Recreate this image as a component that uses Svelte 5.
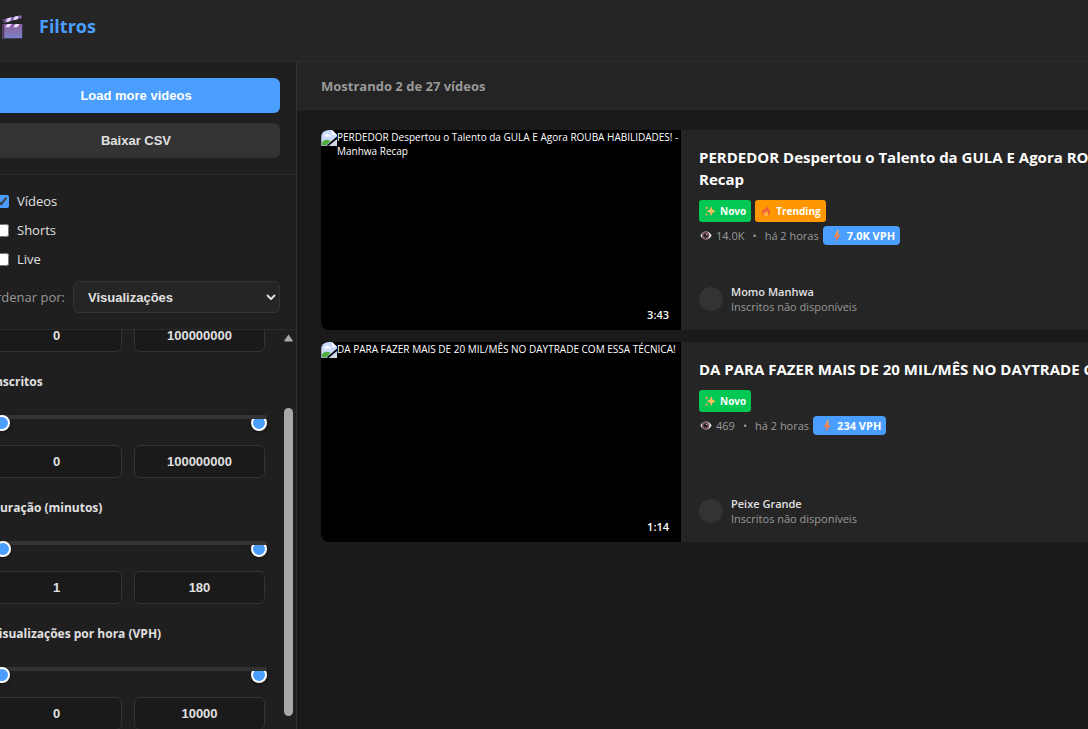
<script>
  import { onMount } from 'svelte';

  const kinds = [
    { id: 'videos', label: 'Vídeos', checked: true },
    { id: 'shorts', label: 'Shorts', checked: false },
    { id: 'live', label: 'Live', checked: false }
  ];

  const filters = [
    { id: 'views', label: 'Visualizações', min: 0, max: 100000000 },
    { id: 'subs', label: 'Inscritos', min: 0, max: 100000000 },
    { id: 'duration', label: 'Duração (minutos)', min: 1, max: 180 },
    { id: 'vph', label: 'Visualizações por hora (VPH)', min: 0, max: 10000 }
  ];

  const videos = [
    {
      title: 'PERDEDOR Despertou o Talento da GULA E Agora ROUBA HABILIDADES! - Manhwa Recap',
      duration: '3:43', trending: true, views: '14.0K', age: 'há 2 horas', vph: '7.0K VPH',
      channel: 'Momo Manhwa'
    },
    {
      title: 'DA PARA FAZER MAIS DE 20 MIL/MÊS NO DAYTRADE COM ESSA TÉCNICA!',
      duration: '1:14', trending: false, views: '469', age: 'há 2 horas', vph: '234 VPH',
      channel: 'Peixe Grande'
    }
  ];

  let list;
  onMount(() => {
    list.scrollTop = 103;
  });
</script>

{#snippet clapper()}
  <svg class="clapper" viewBox="0 0 21 24" aria-hidden="true">
    <defs>
      <linearGradient id="board" x1="0" y1="0" x2="0" y2="1">
        <stop offset="0" stop-color="#8d6295" />
        <stop offset="1" stop-color="#7d80cc" />
      </linearGradient>
    </defs>
    <path d="M.3 4.500 19 .2l1 2.900L1.500 8z" fill="#8b68b4" />
    <path d="m5.500 3.300 4-1-1.500 3.900-4 1zM12.500 1.700l4-1-1 3.600-4 1z" fill="#e6dcff" />
    <path d="M.3 4.500 2.300 4l1.200 3.500-2 .5z" fill="#4d3953" />
    <path d="M.2 9h20v14.300H.2z" fill="url(#board)" />
    <path d="M.2 9h2v14.300h-2z" fill="#503c58" />
    <path d="M2.200 9h18v3.300h-18z" fill="#8b5ca8" />
    <path d="M5.500 9h4.200l-2.400 3.300H3.100zM13.500 9h4.200l-2.400 3.300h-4.200z" fill="#eee3ff" />
  </svg>
{/snippet}

{#snippet sparkles()}
  <svg class="glyph" viewBox="0 0 12 12" aria-hidden="true">
    <path d="M7.200 1.200 8.600 4.800l3.200 1.500-3.200 1.500-1.400 3.200L5.800 7.800 2.600 6.300 5.800 4.800z" fill="#ffbd63" />
    <path d="m2.600 1 .6 1.400 1.400.6-1.400.6L2.600 5 2 3.600.6 3 2 2.400zM2.600 7.800l.5 1.200 1.200.5-1.200.5-.5 1.200-.5-1.200L.9 9.500 2.100 9z" fill="#f5a25c" />
  </svg>
{/snippet}

{#snippet flame()}
  <svg class="glyph" viewBox="0 0 12 12" aria-hidden="true">
    <path d="M6.300.6c.3 1.500 3.600 3.500 3.600 6.600 0 2.500-1.700 4.200-3.900 4.200S2.100 9.800 2.100 7.500c0-1.600.8-2.800 1.500-3.500l.7 1.300C5.400 4.200 6.500 2.400 6.300.6z" fill="#f4583f" />
    <path d="M6.500 5c.2 1.300 1.900 2 1.900 4 0 1.400-1 2.400-2.400 2.400S3.600 10.400 3.600 9.100c0-1 .6-1.600 1-2l.7.8c.8-.8 1.200-1.700 1.200-2.900z" fill="#ffb13b" />
  </svg>
{/snippet}

{#snippet bolt()}
  <svg class="glyph" viewBox="0 0 12 12" aria-hidden="true">
    <defs>
      <linearGradient id="bolt" x1="0" y1="0" x2="0" y2="1">
        <stop offset="0" stop-color="#ffa348" />
        <stop offset="1" stop-color="#f0604f" />
      </linearGradient>
    </defs>
    <path d="M6.600.5 2.800 6.800h2.400L4.800 11.700 9.400 5H7L8.200.5z" fill="url(#bolt)" />
  </svg>
{/snippet}

{#snippet eye()}
  <svg class="eye" viewBox="0 0 12 9" aria-hidden="true">
    <path d="M.4 4.500C1.800 1.900 3.700.6 6 .6s4.200 1.300 5.600 3.900C10.200 7.100 8.300 8.400 6 8.400S1.800 7.100.4 4.500z" fill="#eee8ee" />
    <circle cx="5.600" cy="4.500" r="3.700" fill="#754e57" />
    <circle cx="5.600" cy="4.500" r="1.900" fill="#241b24" />
    <circle cx="6.600" cy="3.400" r=".6" fill="#e3d2da" />
  </svg>
{/snippet}

{#snippet broken()}
  <svg class="broken" viewBox="0 0 16 16" aria-hidden="true">
    <path d="M0 0h11l5 5v11H0z" fill="#c3d5f7" />
    <path d="M1 1h10v4h4v10H1z" fill="#c9dafb" />
    <path d="M11 0v5h5z" fill="#f5f7fb" />
    <path d="M3 6.500c0-1.300 1-2 2-1.900.4-1.200 2.600-1.200 3 .2 1.300 0 1.800.8 1.700 1.700z" fill="#fff" />
    <path d="M1 15v-2.500C3.500 9 7 9.500 9.500 11L5.500 15z" fill="#4fae3c" />
    <path d="M16 6.500 5.500 15.500 7.500 16 16 9z" fill="#000" />
    <path d="M9 16h7V10z" fill="#d2d6de" />
    <path d="M0 0h1v16H0zM0 15h5v1H0z" fill="#9aa5b5" />
  </svg>
{/snippet}

<div class="page">
  <header class="top">
    {@render clapper()}
    <h1>Filtros</h1>
  </header>

  <div class="body">
    <aside>
      <div class="actions">
        <button class="primary" type="button">Load more videos</button>
        <button type="button">Baixar CSV</button>
      </div>

      <div class="options">
        <div class="kinds">
          {#each kinds as kind (kind.id)}
            <label><input type="checkbox" checked={kind.checked} />{kind.label}</label>
          {/each}
        </div>
        <div class="sort">
          <label for="sort">Ordenar por:</label>
          <div class="picker">
            <select id="sort">
              <option>Visualizações</option>
            </select>
            <svg viewBox="0 0 10 6" aria-hidden="true"><path d="m1 1 4 4 4-4" fill="none" stroke="#e0e0e0" stroke-width="2" /></svg>
          </div>
        </div>
      </div>

      <div class="scroller">
        <div class="filters" bind:this={list}>
          {#each filters as f (f.id)}
            <section role="group" aria-labelledby={f.id}>
              <h2 id={f.id}>{f.label}</h2>
              <div class="slider">
                <input type="range" min="0" max={f.max} value={f.max} aria-label="Máximo" />
                <div class="track"></div>
                <input type="range" min="0" max={f.max} value={f.min} aria-label="Mínimo" />
              </div>
              <div class="pair">
                <input type="text" inputmode="numeric" value={f.min} aria-label="Mínimo" />
                <input type="text" inputmode="numeric" value={f.max} aria-label="Máximo" />
              </div>
            </section>
          {/each}
        </div>
        <div class="bar" aria-hidden="true">
          <svg viewBox="0 0 9 8"><path d="M4.500.5 8.700 6.500Q9 7.500 8 7.500H1Q0 7.500.3 6.500z" fill="#a8a8a8" /></svg>
          <div class="thumb"></div>
        </div>
      </div>
    </aside>

    <main>
      <div class="summary">Mostrando 2 de 27 vídeos</div>
      <div class="cards">
        {#each videos as v (v.title)}
          <article>
            <div class="preview">
              {@render broken()}
              <span class="alt">{v.title}</span>
              <span class="time">{v.duration}</span>
            </div>
            <div class="info">
              <h3>{v.title}</h3>
              <div class="badges">
                <span class="badge">{@render sparkles()}Novo</span>
                {#if v.trending}
                  <span class="badge hot">{@render flame()}Trending</span>
                {/if}
              </div>
              <div class="meta">
                {@render eye()}
                <span>{v.views}</span>
                <span class="dot">•</span>
                <span>{v.age}</span>
                <span class="vph">{@render bolt()}{v.vph}</span>
              </div>
              <div class="channel">
                <div class="avatar"></div>
                <div>
                  <strong>{v.channel}</strong>
                  <p>Inscritos não disponíveis</p>
                </div>
              </div>
            </div>
          </article>
        {/each}
      </div>
    </main>
  </div>
</div>

<style>
  :global(body) {
    background: #1a1a1a;
    overflow: hidden;
  }
  :global(*) {
    box-sizing: border-box;
  }
  h1, h2, h3, p {
    margin: 0;
  }
  svg {
    display: block;
    flex: none;
  }
  .page {
    display: flex;
    flex-direction: column;
    height: 100vh;
    min-width: 1380px;
    margin-left: -24px;
    color: #e0e0e0;
    background: #1a1a1a;
    font-family: "Open Sans", "Noto Sans", sans-serif;
  }
  .top {
    display: flex;
    flex: none;
    gap: 16px;
    height: 62px;
    padding: 12px 24px;
    background: #252525;
    border-bottom: 1px solid #2d2d2d;
  }
  .clapper {
    width: 21px;
    height: 24px;
    margin: 3px 0 0 2px;
  }
  h1 {
    color: #4a9eff;
    font-size: 18px;
    line-height: 28px;
    font-weight: 700;
  }
  .body {
    display: flex;
    flex: 1;
    min-height: 0;
  }
  aside {
    display: flex;
    flex: none;
    flex-direction: column;
    width: 321px;
    background: #1f1f1f;
    border-right: 1px solid #333;
  }
  .actions {
    display: flex;
    flex-direction: column;
    gap: 10px;
    padding: 16px;
    border-bottom: 1px solid #2a2a2a;
  }
  button {
    height: 35px;
    border: 0;
    border-radius: 6px;
    color: #e0e0e0;
    background: #333;
    font: 700 13px "Liberation Sans", Arial, sans-serif;
  }
  button.primary {
    color: #fff;
    background: #4a9eff;
  }
  .options {
    display: flex;
    flex-direction: column;
    gap: 12px;
    padding: 16px;
    border-bottom: 1px solid #2a2a2a;
  }
  .kinds {
    display: flex;
    flex-direction: column;
    gap: 9px;
  }
  .kinds label {
    display: flex;
    align-items: center;
    gap: 8px;
    font-size: 13px;
    line-height: 20px;
  }
  .kinds input {
    margin: 0 0 0 4px;
    accent-color: #4a9eff;
  }
  .sort {
    display: flex;
    align-items: center;
    gap: 8px;
  }
  .sort label {
    display: flex;
    justify-content: flex-end;
    flex: none;
    width: 73px;
    color: #999;
    font-size: 13px;
    white-space: nowrap;
  }
  .picker {
    display: grid;
    flex: 1;
    align-items: center;
  }
  .picker > * {
    grid-area: 1 / 1;
  }
  .picker svg {
    width: 10px;
    height: 6px;
    margin-right: 4px;
    justify-self: end;
    pointer-events: none;
  }
  select {
    appearance: none;
    width: 100%;
    height: 32px;
    padding: 0 14px;
    color: #e0e0e0;
    background: #252525;
    border: 1px solid #333;
    border-radius: 6px;
    font: 700 13px "Liberation Sans", Arial, sans-serif;
  }
  .scroller {
    display: flex;
    flex: 1;
    min-height: 0;
  }
  .filters {
    flex: 1;
    min-width: 0;
    padding: 18px 19px 16px 15px;
    overflow-y: scroll;
    scrollbar-width: none;
  }
  section {
    margin-bottom: 19px;
  }
  h2 {
    font-size: 12px;
    line-height: 22px;
    font-weight: 700;
  }
  .slider {
    display: grid;
    height: 16px;
    margin: 22px -2px 14px 3px;
  }
  .slider > * {
    grid-area: 1 / 1;
  }
  .track {
    height: 4px;
    background: #333;
    border-radius: 2px;
  }
  .slider input {
    appearance: none;
    width: 100%;
    height: 16px;
    margin: 0;
    background: none;
  }
  .slider input::-webkit-slider-thumb {
    appearance: none;
    width: 16px;
    height: 16px;
    background: #4a9eff;
    border: 2px solid #fff;
    border-radius: 50%;
    box-shadow: 0 2px 4px rgb(0 0 0 / 30%);
  }
  .pair {
    display: grid;
    grid-template-columns: 1fr 1fr;
    gap: 12px;
  }
  .pair input {
    width: 100%;
    height: 33px;
    padding: 0 8px;
    color: #e0e0e0;
    background: #1a1a1a;
    border: 1px solid #333;
    border-radius: 6px;
    font: 700 13px "Liberation Sans", Arial, sans-serif;
    text-align: center;
  }
  .bar {
    display: flex;
    flex: none;
    flex-direction: column;
    gap: 66px;
    width: 12px;
    padding: 4px 3px 13px 0;
  }
  .bar svg {
    width: 9px;
    height: 8px;
  }
  .thumb {
    flex: 1;
    background: #a8a8a8;
    border-radius: 5px;
  }
  main {
    flex: 1;
    min-width: 0;
  }
  .summary {
    padding: 14px 24px 13px;
    color: #999;
    background: #242424;
    border-bottom: 1px solid #2d2d2d;
    font-size: 13px;
    line-height: 20px;
    font-weight: 700;
  }
  .cards {
    display: flex;
    flex-direction: column;
    gap: 12px;
    padding: 20px 24px;
  }
  article {
    display: flex;
    overflow: hidden;
    background: #252525;
    border-radius: 8px;
  }
  .preview {
    position: relative;
    display: flex;
    flex: none;
    width: 360px;
    height: 200px;
    background: #000;
    color: #fff;
  }
  .broken {
    width: 16px;
    height: 16px;
  }
  .alt {
    font-size: 10px;
    line-height: 14px;
  }
  .time {
    position: absolute;
    right: 12px;
    bottom: 7px;
    font-size: 11px;
    line-height: 16px;
    font-weight: 600;
  }
  .info {
    display: flex;
    flex: 1;
    flex-direction: column;
    padding: 16px 18px;
  }
  h3 {
    color: #fff;
    font-size: 15px;
    line-height: 22px;
    font-weight: 700;
  }
  .badges {
    display: flex;
    gap: 4px;
    margin: 10px 0 4px;
  }
  .badge {
    display: flex;
    align-items: center;
    gap: 4px;
    height: 22px;
    padding: 0 5px;
    color: #fff;
    background: #00c853;
    border-radius: 3px;
    font-size: 10px;
    font-weight: 700;
  }
  .hot {
    background: #ff9800;
  }
  .glyph {
    width: 12px;
    height: 12px;
  }
  .meta {
    display: flex;
    align-items: center;
    height: 19px;
    color: #999;
    font-size: 11px;
  }
  .eye {
    width: 12px;
    height: 9px;
    margin: 0 4px 0 1px;
  }
  .dot {
    margin: 0 8px;
  }
  .vph {
    display: flex;
    align-items: center;
    gap: 4px;
    height: 19px;
    margin-left: 4px;
    padding: 0 5px 0 8px;
    color: #fff;
    background: #4a9eff;
    border-radius: 4px;
    font-weight: 700;
  }
  .channel {
    display: flex;
    align-items: center;
    gap: 8px;
    margin-top: auto;
    font-size: 11px;
    line-height: 15px;
  }
  .avatar {
    width: 24px;
    height: 24px;
    background: #333;
    border-radius: 50%;
  }
  strong {
    display: block;
    font-weight: 600;
  }
  .channel p {
    color: #999;
  }
</style>
